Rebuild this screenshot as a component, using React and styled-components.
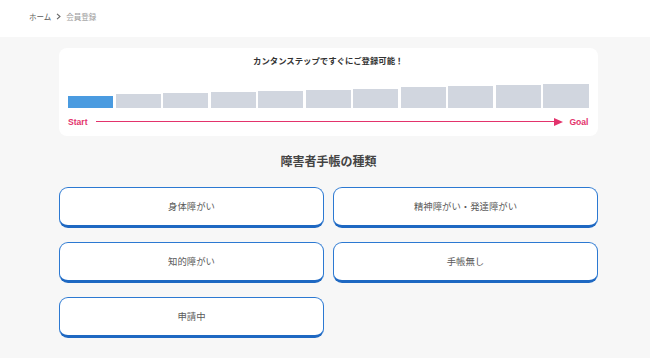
import React from "react";
import styled, { createGlobalStyle } from "styled-components";

const Global = createGlobalStyle`
  * { box-sizing: border-box; }
  html, body { margin: 0; padding: 0; background: #f7f7f7; }
  body { font-family: "Noto Sans CJK JP", "Noto Sans", sans-serif; }
`;

const Header = styled.header`
  height: 37px;
  background: #ffffff;
  display: flex;
  align-items: center;
  padding-left: 29px;
  padding-bottom: 4px;
  gap: 5px;
  font-size: 7.5px;
`;

const Crumb = styled.span`
  color: ${(p) => (p.$current ? "#9a9a9a" : "#5a5a5a")};
  line-height: 10px;
`;

const Main = styled.main`
  width: 539px;
  margin-left: 59px;
  padding-top: 10.5px;
  padding-bottom: 20px;
`;

const Card = styled.section`
  background: #ffffff;
  border-radius: 8px;
  padding: 6.5px 9.5px 8px 9px;
  display: flex;
  flex-direction: column;
`;

const CardTitle = styled.h2`
  margin: 0;
  text-align: center;
  font-size: 8.4px;
  line-height: 12px;
  font-weight: 700;
  color: #333333;
`;

const Bars = styled.div`
  margin-top: 17.5px;
  height: 24px;
  display: flex;
  align-items: flex-end;
  gap: 2.5px;
`;

const Bar = styled.div`
  flex: 1;
  background: ${(p) => (p.$active ? "#4a9be0" : "#d1d6df")};
`;

const ArrowRow = styled.div`
  margin-top: 8px;
  height: 12px;
  display: flex;
  align-items: center;
`;

const Label = styled.span`
  font-family: "Liberation Sans", "Noto Sans", sans-serif;
  font-weight: 700;
  font-size: 8.6px;
  color: #e3336c;
  line-height: 12px;
`;

const Line = styled.div`
  flex: 1;
  height: 1.5px;
  background: #e3336c;
  margin-left: 8px;
`;

const Head = styled.svg`
  display: block;
  margin-right: 6px;
`;

const Heading = styled.h1`
  margin: 17px 0 0;
  text-align: center;
  font-size: 12px;
  line-height: 16px;
  font-weight: 700;
  color: #444444;
`;

const Grid = styled.div`
  margin-top: 18px;
  display: grid;
  grid-template-columns: 265px 265px;
  column-gap: 9px;
  row-gap: 14px;
`;

const Choice = styled.button`
  height: 41px;
  background: #ffffff;
  border: 1.5px solid #2c79d2;
  border-bottom-width: 3px;
  border-bottom-color: #1e68c2;
  border-radius: 9px;
  font-family: "Noto Sans CJK JP", "Noto Sans", sans-serif;
  font-size: 9.4px;
  color: #5a5a5a;
  padding: 0;
  cursor: pointer;
`;

const heights = Array.from({ length: 11 }, (_, i) => 12 + (i * 11.5) / 10);
const choices = ["身体障がい", "精神障がい・発達障がい", "知的障がい", "手帳無し", "申請中"];

export default function App() {
  return (
    <>
      <Global />
      <Header>
        <Crumb>ホーム</Crumb>
        <svg width="5" height="7" viewBox="0 0 5 7">
          <path d="M1 0.8 L4 3.5 L1 6.2" fill="none" stroke="#666" strokeWidth="1.1" />
        </svg>
        <Crumb $current>会員登録</Crumb>
      </Header>
      <Main>
        <Card>
          <CardTitle>カンタンステップですぐにご登録可能！</CardTitle>
          <Bars>
            {heights.map((h, i) => (
              <Bar key={i} $active={i === 0} style={{ height: `${h}px` }} />
            ))}
          </Bars>
          <ArrowRow>
            <Label>Start</Label>
            <Line />
            <Head width="9" height="8" viewBox="0 0 9 8">
              <path d="M0 0 L9 4 L0 8 Z" fill="#e3336c" />
            </Head>
            <Label>Goal</Label>
          </ArrowRow>
        </Card>
        <Heading>障害者手帳の種類</Heading>
        <Grid>
          {choices.map((c) => (
            <Choice key={c}>{c}</Choice>
          ))}
        </Grid>
      </Main>
    </>
  );
}
